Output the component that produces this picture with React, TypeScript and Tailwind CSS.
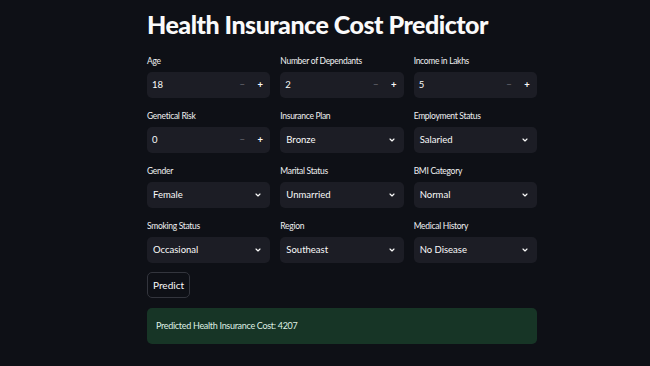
import React from "react";

const font = { fontFamily: "Lato, 'Noto Sans', sans-serif" };

function Label({ children }: any) {
  return <div className="mb-[6px] h-[10px] text-[8.5px] leading-[10px] tracking-[-0.3px] text-[#f0f0f2]">{children}</div>;
}

function NumberField({ label, value }: any) {
  return (
    <div>
      <Label>{label}</Label>
      <div className="flex h-[26px] items-center rounded-[5px] bg-[#1c1d25] pl-[5px] pr-[1px] text-[9.5px] text-[#fafafa]">
        <span className="flex-1">{value}</span>
        <span className="w-[18px] text-center text-[#6b6c74]">−</span>
        <span className="w-[18px] text-center font-bold">+</span>
      </div>
    </div>
  );
}

function SelectField({ label, value }: any) {
  return (
    <div>
      <Label>{label}</Label>
      <div className="flex h-[26px] items-center rounded-[5px] bg-[#1c1d25] pl-[6px] pr-[8px] text-[9.5px] text-[#fafafa]">
        <span className="flex-1">{value}</span>
        <svg width="8" height="8" viewBox="0 0 24 24" fill="none" stroke="#fafafa" strokeWidth="3.5" strokeLinecap="round" strokeLinejoin="round">
          <path d="M6 9l6 6 6-6" />
        </svg>
      </div>
    </div>
  );
}

export default function App() {
  return (
    <div className="min-h-[366px] w-full bg-[#0e1016]" style={font}>
      <div className="ml-[147px] w-[390px] pt-[7px]">
        <h1 className="text-[25px] font-black leading-[34px] tracking-[-0.5px] text-[#fafafa]">Health Insurance Cost Predictor</h1>
        <div className="mt-[15px] grid grid-cols-3 gap-x-[10px] gap-y-[13px]">
          <NumberField label="Age" value="18" />
          <NumberField label="Number of Dependants" value="2" />
          <NumberField label="Income in Lakhs" value="5" />
          <NumberField label="Genetical Risk" value="0" />
          <SelectField label="Insurance Plan" value="Bronze" />
          <SelectField label="Employment Status" value="Salaried" />
          <SelectField label="Gender" value="Female" />
          <SelectField label="Marital Status" value="Unmarried" />
          <SelectField label="BMI Category" value="Normal" />
          <SelectField label="Smoking Status" value="Occasional" />
          <SelectField label="Region" value="Southeast" />
          <SelectField label="Medical History" value="No Disease" />
        </div>
        <button className="mt-[9px] h-[26px] rounded-[5px] border border-[#33353d] px-[5px] text-[10px] text-[#fafafa]">
          Predict
        </button>
        <div className="mt-[10px] flex h-[36px] items-center rounded-[5px] bg-[#173526] px-[9px] text-[9px] tracking-[-0.3px] text-[#dff0e4]">
          Predicted Health Insurance Cost: 4207
        </div>
      </div>
    </div>
  );
}
